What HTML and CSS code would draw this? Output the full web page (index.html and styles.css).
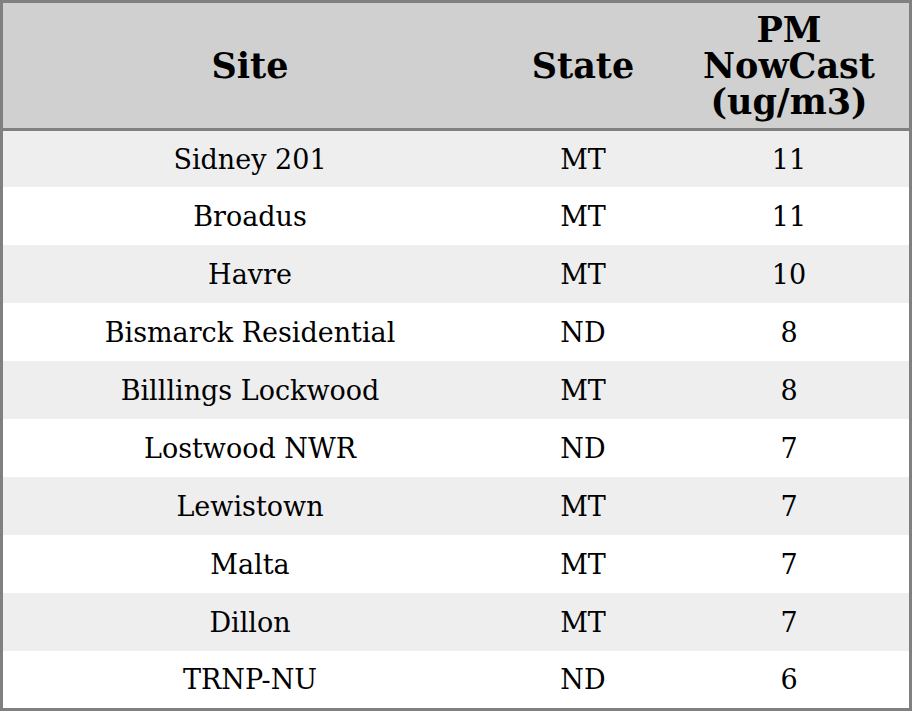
FILE: index.html
```html
<!DOCTYPE html>
<html>
<head>
<meta charset="utf-8">
<link rel="stylesheet" href="styles.css">
</head>
<body>
<table class="aq">
  <colgroup>
    <col class="c-site">
    <col class="c-state">
    <col class="c-pm">
  </colgroup>
  <thead>
    <tr><th>Site</th><th>State</th><th>PM<br>NowCast<br>(ug/m3)</th></tr>
  </thead>
  <tbody>
    <tr><td>Sidney 201</td><td>MT</td><td>11</td></tr>
    <tr><td>Broadus</td><td>MT</td><td>11</td></tr>
    <tr><td>Havre</td><td>MT</td><td>10</td></tr>
    <tr><td>Bismarck Residential</td><td>ND</td><td>8</td></tr>
    <tr><td>Billlings Lockwood</td><td>MT</td><td>8</td></tr>
    <tr><td>Lostwood NWR</td><td>ND</td><td>7</td></tr>
    <tr><td>Lewistown</td><td>MT</td><td>7</td></tr>
    <tr><td>Malta</td><td>MT</td><td>7</td></tr>
    <tr><td>Dillon</td><td>MT</td><td>7</td></tr>
    <tr><td>TRNP-NU</td><td>ND</td><td>6</td></tr>
  </tbody>
</table>
</body>
</html>
```
FILE: styles.css
```css
html, body {
  margin: 0;
  padding: 0;
  background: #ffffff;
}
.aq {
  width: 912px;
  height: 711px;
  border-collapse: separate;
  border-spacing: 0;
  border: 3px solid #808080;
  font-family: "DejaVu Serif", serif;
  color: #000;
  table-layout: fixed;
  box-sizing: border-box;
}
.c-site { width: 494px; }
.c-state { width: 172px; }
.c-pm { width: 240px; }
.aq th {
  background: #d0d0d0;
  font-weight: bold;
  font-size: 35px;
  line-height: 36px;
  height: 125px;
  padding: 0;
  text-align: center;
  vertical-align: middle;
  border-bottom: 3px solid #808080;
}
.aq td {
  font-size: 27px;
  height: 58px;
  padding: 0;
  text-align: center;
  vertical-align: middle;
}
.aq tbody tr:first-child td { height: 56px; }
.aq tbody tr:last-child td { height: 57px; }
.aq tbody tr:nth-child(odd) td { background: #eeeeee; }
.aq tbody tr:nth-child(even) td { background: #ffffff; }
```
